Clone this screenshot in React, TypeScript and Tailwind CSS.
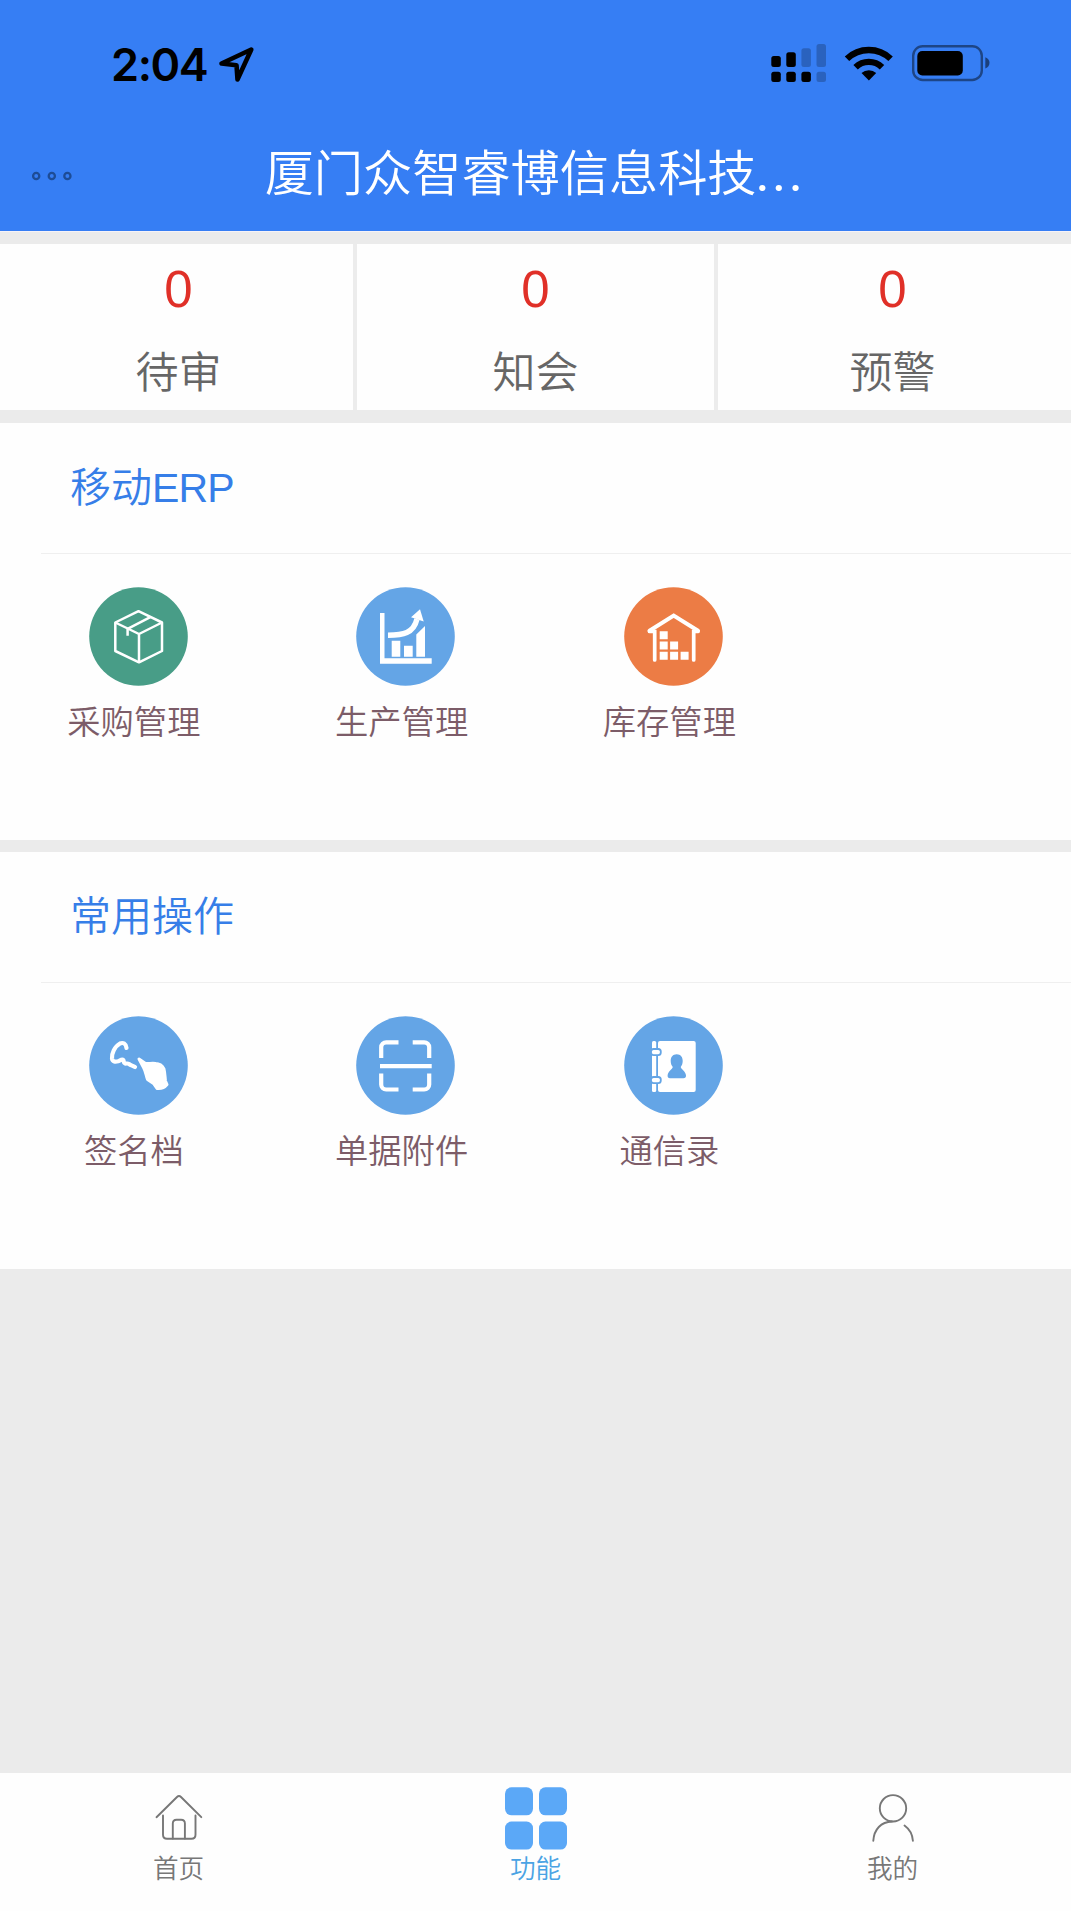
import type { ReactNode } from 'react';
import clsx from 'clsx';

type Entry = {
	label: string;
	color: string;
	icon: ReactNode;
};

const BoxIcon = () => (
	<g fill="none" stroke="#fff" strokeWidth="2.5" strokeLinejoin="round">
		<path d="M49.5 24.2 26.3 35.5V64L50 75.3 73 64V35.5Z" />
		<path d="M26.3 35.5 50 47 73 35.5M50 47v28.3" />
		<path d="M61.3 30.2 38.6 41.8v7" />
	</g>
);

const ChartIcon = () => (
	<g fill="#fff">
		<path d="M24 26h4.5v45.3h47.2v5.5H24Z" />
		<path d="M35.7 53.7h8.6v16h-8.6ZM48 58.7h8.7v11H48ZM60.3 47.6 69 39v30.7h-8.7Z" />
		<path d="M32 48.2C47 48 57.5 46.5 61 32" fill="none" stroke="#fff" strokeWidth="5.4" />
		<path d="M64 22.3 55 30.3 67.7 34.5Z" />
	</g>
);

const WarehouseIcon = () => (
	<g fill="#fff">
		<path d="M25.5 44.5h5.2v28.5M74 44.5h-4.3v28.5" fill="none" stroke="#fff" strokeWidth="3.7" strokeLinecap="round" />
		<path d="M25.5 43.8 49.7 28.6 74 43.8" fill="none" stroke="#fff" strokeWidth="4" strokeLinecap="round" />
		<path d="M35.7 44.2h8v8h-8ZM35.7 54.5h8v8h-8ZM46.1 54.5h8v8h-8ZM35.7 64.8h8v8h-8ZM46.1 64.8h8v8h-8ZM56.6 64.8h8v8h-8Z" />
	</g>
);

const SignatureIcon = () => (
	<g stroke="#fff" strokeLinecap="round" strokeLinejoin="round">
		<path
			d="M37.5 32C37 27.5 34 26.2 31 27.5 25.5 30.5 22.500 38 23 42.500c.5 3.500 3.500 3.500 6 2.800 2-.8 4-2.500 5.300-1.300.8 1-.2 3 1.700 3.500 1.500.3 2.500-.5 4 .5 2 1.500 3.500 1.500 6 3"
			fill="none"
			strokeWidth="4.2"
		/>
		<path
			d="M50 43 56.500 47.500C60 48 63 46.500 66.500 47.500 70 47.500 73.500 50 75 53 76 57 76 61 76.500 65L78 68.500C76 71 72.500 73 68 72.500L64.500 67.500 58.500 63.500C57 60 57 56 54.500 51.500Z"
			fill="#fff"
			strokeWidth="3"
		/>
	</g>
);

const ScanIcon = () => (
	<g fill="none" stroke="#fff" strokeWidth="4.2">
		<path d="M25.2 42V31.3a5 5 0 0 1 5-5h12.3M56.7 26.3h11.5a5 5 0 0 1 5 5V42M73.2 57.5v11a5 5 0 0 1-5 5H56.7M42.5 73.5H30.2a5 5 0 0 1-5-5v-11" />
		<path d="M24 50.2h51.7" />
	</g>
);

const ContactsIcon = () => (
	<g fill="#fff">
		<rect x="34" y="25" width="37.7" height="51" rx="2" />
		<rect x="28" y="25" width="4.2" height="51" rx="1.5" />
		<g stroke="#64a5e6" strokeWidth="1.8">
			<rect x="27" y="33" width="9.8" height="6.2" rx="2.6" />
			<rect x="27" y="61" width="9.8" height="6.2" rx="2.6" />
		</g>
		<path
			d="M52.7 38.3c3.9 0 6 2.8 6 6.7 0 2.5-.8 4.5-2 6 .4 2.2 5 4.2 5.3 8.5.1 1.7-.8 2.7-2.5 2.7H46c-1.7 0-2.5-1-2.4-2.7.3-4.3 4.8-6.3 5.2-8.5-1.3-1.5-2.1-3.5-2.1-6 0-3.9 2.1-6.7 6-6.7Z"
			fill="#64a5e6"
		/>
	</g>
);

const erpEntries: Entry[] = [
	{ label: '采购管理', color: '#489d87', icon: <BoxIcon /> },
	{ label: '生产管理', color: '#64a5e6', icon: <ChartIcon /> },
	{ label: '库存管理', color: '#ec7c45', icon: <WarehouseIcon /> },
];

const commonEntries: Entry[] = [
	{ label: '签名档', color: '#64a5e6', icon: <SignatureIcon /> },
	{ label: '单据附件', color: '#64a5e6', icon: <ScanIcon /> },
	{ label: '通信录', color: '#64a5e6', icon: <ContactsIcon /> },
];

const counters = [
	{ label: '待审', count: 0, edge: 'border-r-4 pl-1' },
	{ label: '知会', count: 0, edge: '' },
	{ label: '预警', count: 0, edge: 'border-l-4 pr-1' },
];

const tabs = [
	{
		label: '首页',
		active: false,
		icon: (
			<g fill="none" stroke="#777" strokeWidth="1.9" strokeLinecap="round">
				<path d="M9.5 31.2 30 11Q32 9 34 11L54.3 31.2" />
				<path d="M16 29.5v19.2q0 4 4 4H44.5q4 0 4-4V29.5" />
				<path d="M25.8 52.5V37.6q0-3.8 3.8-3.8h4.5q3.8 0 3.8 3.8v14.9" />
			</g>
		),
	},
	{
		label: '功能',
		active: true,
		icon: (
			<g fill="#5ba8f7">
				<rect x="1" y="1.3" width="28" height="28" rx="6.5" />
				<rect x="35" y="1.3" width="28" height="28" rx="6.5" />
				<rect x="1" y="35.6" width="28" height="28" rx="6.5" />
				<rect x="35" y="35.6" width="28" height="28" rx="6.5" />
			</g>
		),
	},
	{
		label: '我的',
		active: false,
		icon: (
			<g fill="none" stroke="#777" strokeWidth="1.9" strokeLinecap="round">
				<circle cx="32" cy="22.3" r="13.2" />
				<path d="M12.3 54.8C13 43.5 20 35.8 31 35.5M43.5 39.5C49 43.5 51.5 48.5 51.9 54.8" />
			</g>
		),
	},
];

// signal (dual sim), wifi and battery
const StatusIcons = () => (
	<svg width="221" height="40" viewBox="770 43 221 40">
		<rect x="771.3" y="56" width="9.5" height="11" rx="2.5" />
		<rect x="786.3" y="52.3" width="9.5" height="14.7" rx="2.5" />
		<rect x="801.4" y="48.3" width="9.5" height="18.7" rx="2.5" opacity=".22" />
		<rect x="816.5" y="44" width="9.5" height="23" rx="2.5" opacity=".22" />
		<rect x="771.3" y="71.8" width="9.5" height="10.2" rx="2.5" />
		<rect x="786.3" y="71.8" width="9.5" height="10.2" rx="2.5" />
		<rect x="801.4" y="71.8" width="9.5" height="10.2" rx="2.5" />
		<rect x="816.5" y="71.8" width="9.5" height="10.2" rx="2.5" opacity=".22" />
		<g fill="none" stroke="#000" strokeWidth="6.4">
			<path d="M847 58.7a31.5 31.5 0 0 1 43.6 0" />
			<path d="M855.6 67.2a19 19 0 0 1 26.4 0" />
		</g>
		<path d="M861.5 73a11 11 0 0 1 14.7 0l-7.3 7.5Z" />
		<rect x="913.2" y="46.2" width="68.6" height="33.8" rx="9.5" fill="none" stroke="#000" strokeWidth="2.4" opacity=".45" />
		<rect x="917.3" y="51" width="45.5" height="24.5" rx="5" />
		<path d="M985.3 57.3c5.6 1.7 5.6 9.5 0 11.2Z" opacity=".5" />
	</svg>
);

function Header() {
	return (
		<header className="h-[231px] bg-[#367ef4]">
			<div className="flex items-start justify-between h-[126px] pl-[111px] pr-20">
				<div className="flex pt-10 gap-[11px]">
					<span className="font-['Inter',sans-serif] font-semibold text-[45px] leading-[50px] tracking-[-1.4px]">2:04</span>
					<svg className="mt-[6px]" width="37" height="37" viewBox="0 0 37 37" fill="none" stroke="#000" strokeWidth="4.6" strokeLinejoin="round">
						<path d="M33.3 3.5 3.5 17.5 18.5 19.2 19.5 33.5Z" />
					</svg>
				</div>
				<div className="pt-[43px]">
					<StatusIcons />
				</div>
			</div>
			<div className="flex items-center h-[90px] px-[31px]">
				<svg className="mt-[10px]" width="42" height="12" viewBox="0 0 42 12" fill="none" stroke="#1d4c96" strokeWidth="2.3">
					<circle cx="5.2" cy="6" r="3.1" />
					<circle cx="20.8" cy="6" r="3.1" />
					<circle cx="36.4" cy="6" r="3.1" />
				</svg>
				<h1 className="flex-1 mr-[42px] text-center text-white text-[49.2px] leading-[60px]">
					厦门众智睿博信息科技<span className="font-['Lato',sans-serif] font-normal tracking-[5px]">...</span>
				</h1>
			</div>
		</header>
	);
}

function Section({ title, latin, entries }: { title: string; latin?: string; entries: Entry[] }) {
	return (
		<section className="h-[417px] bg-[#fefefe]">
			<div className="ml-[41px] h-[131px] border-b border-[#efefef] pl-[29px] pt-[31px]">
				<h2 className="text-[41px] leading-[60px] text-[#367ee8]">
					{title}
					{latin && <span className="font-['Liberation_Sans',sans-serif] font-normal tracking-[-0.8px]">{latin}</span>}
				</h2>
			</div>
			<div className="grid grid-cols-4 pt-[33px]">
				{entries.map(({ label, color, icon }) => (
					<div key={label} className="flex flex-col items-center">
						<svg className="ml-[8.6px]" width="99" height="99" viewBox="0 0 99 99">
							<circle cx="49.5" cy="49.5" r="49.3" fill={color} />
							{icon}
						</svg>
						<span className="mt-3 text-[33.3px] leading-[44px] text-[#7c5c68]">{label}</span>
					</div>
				))}
			</div>
		</section>
	);
}

function TabBar() {
	return (
		<nav className="grid grid-cols-3 h-[138px] bg-[#fefefe]">
			{tabs.map(({ label, active, icon }) => (
				<div key={label} className="flex flex-col items-center pt-[13px]">
					<svg width="64" height="65" viewBox="0 0 64 65">{icon}</svg>
					<span className={clsx('text-[25.6px] leading-[32px]', active ? 'text-[#4aa3e4]' : 'text-[#777]')}>{label}</span>
				</div>
			))}
		</nav>
	);
}

export default function App() {
	return (
		<div className="flex flex-col h-[1911px] bg-[#ebebeb] font-['Noto_Sans_CJK_SC',sans-serif] font-[350]">
			<Header />

			<div className="h-[13px] border-t border-[#f6f3f8]" />

			<div className="grid grid-cols-3 h-[166px] bg-[#fefefe]">
				{counters.map(({ label, count, edge }) => (
					<div key={label} className={clsx('flex flex-col items-center pt-[15px] border-[#ececec]', edge)}>
						<span className="font-['Liberation_Sans',sans-serif] text-[51px] leading-[61px] text-[#e03028]">{count}</span>
						<span className="mt-[19px] text-[43px] leading-[60px] text-[#666]">{label}</span>
					</div>
				))}
			</div>

			<div className="flex flex-col gap-3 mt-[13px]">
				<Section title="移动" latin="ERP" entries={erpEntries} />
				<Section title="常用操作" entries={commonEntries} />
			</div>

			<div className="flex-1" />
			<TabBar />
		</div>
	);
}
